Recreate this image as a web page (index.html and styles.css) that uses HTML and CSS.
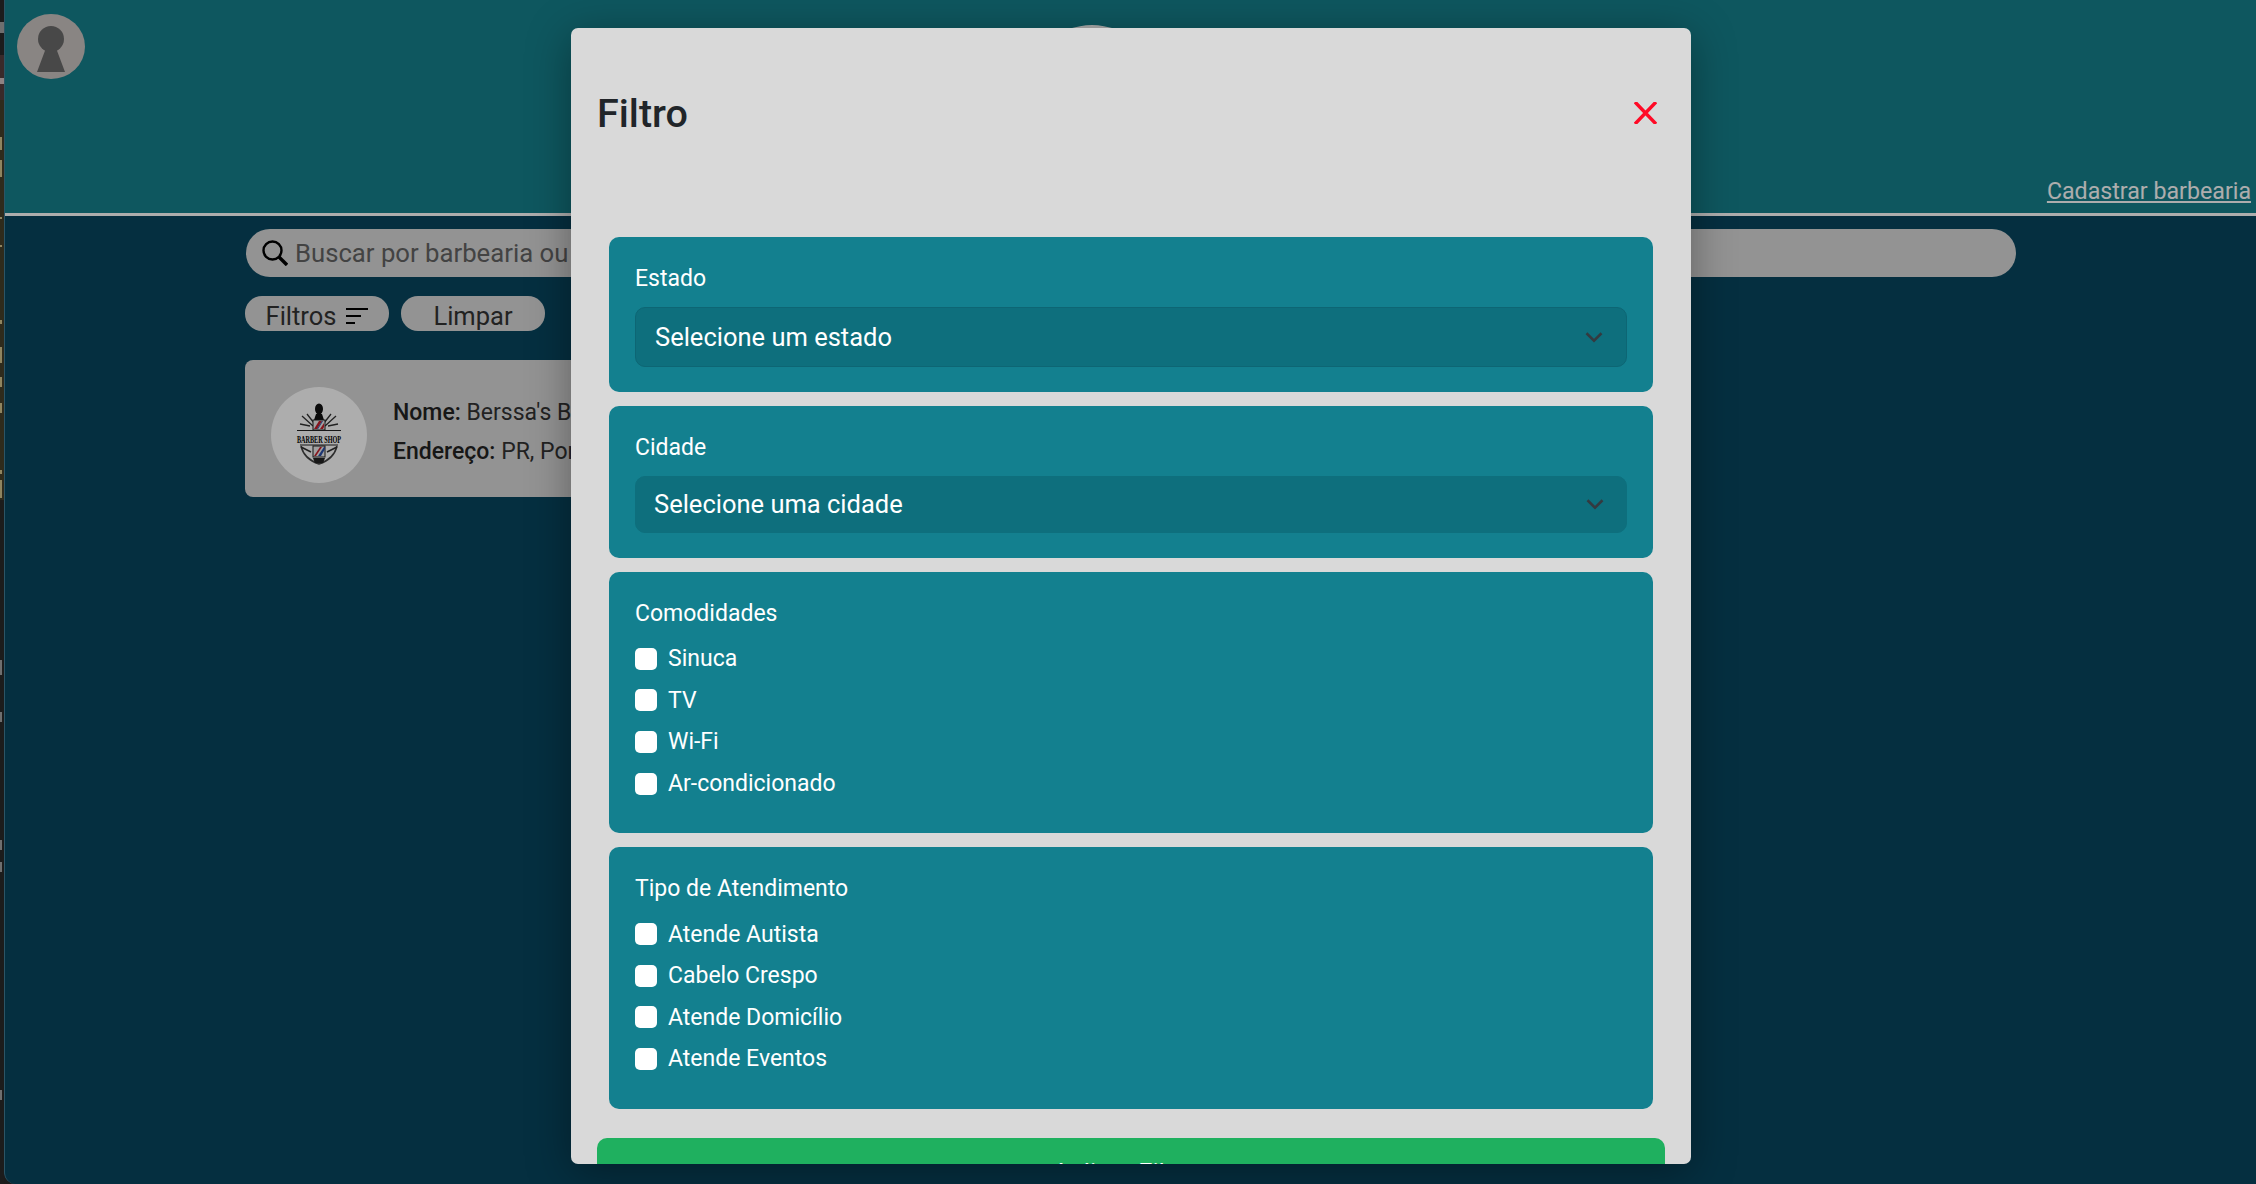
FILE: index.html
```html
<!DOCTYPE html>
<html lang="pt-BR">
<head>
  <meta charset="UTF-8" />
  <title>Barbearias</title>
  <link rel="stylesheet" href="styles.css">
</head>
<body>
  <!-- sliver of the window behind the browser -->
  <div class="strip">
    <div class="strip-a"></div>
    <div class="strip-b"></div>
    <div class="strip-c"></div>
    <div class="strip-d"></div>
  </div>

  <div class="window">
    <header class="topbar">
      <svg class="avatar" viewBox="0 0 68 65">
        <ellipse cx="34" cy="32.5" rx="34" ry="32.5" fill="#cbc4c1"/>
        <circle cx="34" cy="25" r="13" fill="#6a6a6a"/>
        <polygon points="29,34 39,34 48,58 20,58" fill="#6a6a6a"/>
      </svg>
      <div class="top-logo"></div>
      <a class="register-link" href="#">Cadastrar barbearia</a>
    </header>

    <main class="content">
      <div class="search">
        <svg class="search-icon" viewBox="0 0 26 26" fill="none" stroke="#000">
          <circle cx="10.5" cy="10.5" r="9" stroke-width="2.4"/>
          <path d="M17 17l8 8" stroke-width="3.4"/>
        </svg>
        <input class="search-input" type="text" placeholder="Buscar por barbearia ou cidade" />
      </div>

      <div class="actions">
        <button class="pill pill-filter">Filtros
          <svg class="filter-icon" viewBox="0 0 22 16" fill="none" stroke="#000" stroke-width="2">
            <path d="M0 1h22M0 8h15M0 15h9"/>
          </svg>
        </button>
        <button class="pill pill-clear">Limpar</button>
      </div>

      <article class="shop-card">
        <div class="shop-logo">
          <svg viewBox="0 0 46 64" width="46" height="64">
            <ellipse cx="23" cy="6" rx="4" ry="5.5" fill="#111"/>
            <path d="M20 11h6l2 6h-10z" fill="#111"/>
            <path d="M6 13l11 10M40 13L29 23M11 11l7 9M35 11l-7 9M4 21l10 2M42 21l-10 2" stroke="#333" stroke-width="1.300" fill="none"/>
            <rect x="17" y="17" width="12" height="10" fill="#eee" stroke="#222"/>
            <path d="M18 26l5-8h3l-5 8zM24 26l4-6v4l-1 2z" fill="#c8202c"/>
            <path d="M21 26l5-8h1l-5 8z" fill="#2a4fa8"/>
            <path d="M1 27.500h44M4 42h38" stroke="#222" stroke-width="1"/>
            <text x="23" y="39.500" class="logo-text" textLength="44" lengthAdjust="spacingAndGlyphs">BARBER SHOP</text>
            <path d="M5 43q3 13 18 18q15-5 18-18" fill="none" stroke="#444" stroke-width="1.600"/>
            <path d="M5 44l10 5M41 44l-10 5" stroke="#333" stroke-width="1.600"/>
            <rect x="17" y="43" width="12" height="11" fill="#eee" stroke="#222"/>
            <path d="M18 53l6-9h2l-6 9z" fill="#c8202c"/>
            <path d="M22 53l6-9h1v2l-4 7z" fill="#2a4fa8"/>
            <path d="M17 55h12l-2 5h-8z" fill="#222"/>
          </svg>
        </div>
        <div class="shop-info">
          <p><b>Nome:</b> Berssa's Barbearia</p>
          <p><b>Endereço:</b> PR, Ponta Grossa</p>
        </div>
      </article>
    </main>

    <div class="backdrop"></div>

    <section class="modal">
      <div class="modal-header">
        <h2 class="modal-title">Filtro</h2>
        <svg class="close-icon" viewBox="0 0 23 22" stroke="#ff0a26" stroke-width="3.4" fill="none">
          <path d="M1 0l21 22M22 0L1 22"/>
        </svg>
      </div>

      <div class="modal-body">
        <div class="group">
          <label class="group-label">Estado</label>
          <div class="select select-state">
            <span>Selecione um estado</span>
            <svg class="chevron" viewBox="0 0 16 16" fill="none" stroke="#343a40" stroke-width="2"><path d="M2 5l6 6 6-6"/></svg>
          </div>
        </div>

        <div class="group">
          <label class="group-label">Cidade</label>
          <div class="select select-city">
            <span>Selecione uma cidade</span>
            <svg class="chevron" viewBox="0 0 16 16" fill="none" stroke="#343a40" stroke-width="2"><path d="M2 5l6 6 6-6"/></svg>
          </div>
        </div>

        <div class="group group-checks">
          <label class="group-label">Comodidades</label>
          <ul class="checks">
            <li><span class="box"></span>Sinuca</li>
            <li><span class="box"></span>TV</li>
            <li><span class="box"></span>Wi-Fi</li>
            <li><span class="box"></span>Ar-condicionado</li>
          </ul>
        </div>

        <div class="group group-checks">
          <label class="group-label">Tipo de Atendimento</label>
          <ul class="checks">
            <li><span class="box"></span>Atende Autista</li>
            <li><span class="box"></span>Cabelo Crespo</li>
            <li><span class="box"></span>Atende Domicílio</li>
            <li><span class="box"></span>Atende Eventos</li>
          </ul>
        </div>
      </div>

      <button class="apply">Aplicar Filtros</button>
    </section>
  </div>
</body>
</html>
```

FILE: styles.css
```css
* {
  box-sizing: border-box;
}
html, body {
  height: 100%;
}
body {
  margin: 0;
  display: flex;
  overflow: hidden;
  background: #1b1b1b;
  font-family: Roboto, "Liberation Sans", sans-serif;
}

/* the strip only shows bits of letters, so gradients are enough */
.strip {
  width: 4px;
  flex-shrink: 0;
  display: flex;
  flex-direction: column;
}
.strip-a {
  height: 55px;
  background: linear-gradient(#1c1c1c 22px, #6f6f6f 22px, #6f6f6f 33px, #1c1c1c 33px);
}
.strip-b {
  height: 45px;
  background: linear-gradient(#3a2a2a 23px, #8f8383 23px, #8f8383 29px, #3a2a2a 29px);
}
.strip-c {
  height: 400px;
  background-color: #2f2b1c;
  background-image: linear-gradient(transparent 37px, #8f8560 37px, #8f8560 50px, transparent 50px,
    transparent 60px, #8f8560 60px, #8f8560 77px, transparent 77px,
    transparent 117px, #8f8560 117px, #8f8560 119px, transparent 119px,
    transparent 145px, #8f8560 145px, #8f8560 147px, transparent 147px,
    transparent 220px, #8f8560 220px, #8f8560 224px, transparent 224px,
    transparent 247px, #8f8560 247px, #8f8560 263px, transparent 263px,
    transparent 277px, #8f8560 277px, #8f8560 287px, transparent 287px,
    transparent 303px, #8f8560 303px, #8f8560 313px, transparent 313px,
    transparent 370px, #8f8560 370px, #8f8560 374px, transparent 374px,
    transparent 380px, #8f8560 380px, #8f8560 398px, transparent 398px);
  background-size: 2px 100%;
  background-repeat: no-repeat;
}
.strip-d {
  flex: 1;
  background-color: #1c1c1c;
  background-image: linear-gradient(transparent 160px, #6f6f6f 160px, #6f6f6f 175px, transparent 175px,
    transparent 212px, #6f6f6f 212px, #6f6f6f 222px, transparent 222px,
    transparent 340px, #6f6f6f 340px, #6f6f6f 350px, transparent 350px,
    transparent 362px, #6f6f6f 362px, #6f6f6f 372px, transparent 372px,
    transparent 590px, #6f6f6f 590px, #6f6f6f 600px, transparent 600px);
  background-size: 2px 100%;
  background-repeat: no-repeat;
}

.window {
  flex: 1;
  position: relative;
  overflow: hidden;
  background: #08465f;
  border-left: 1px solid #2c5566;
  border-bottom-left-radius: 12px;
}

.topbar {
  height: 216px;
  display: flex;
  align-items: flex-start;
  padding: 14px 5px 0 12px;
  background: #15808d;
  border-bottom: 3px solid #fff;
}
.avatar {
  width: 68px;
  height: 65px;
  flex-shrink: 0;
}
.top-logo {
  width: 122px;
  height: 122px;
  margin: 11px 0 0 946px;
  border-radius: 50%;
  background: #fff;
}
.register-link {
  margin-left: auto;
  align-self: flex-end;
  margin-bottom: 8px;
  font-size: 23.200px;
  color: #fff;
}

.content {
  padding: 13px 0 0 240px;
}
.search {
  width: 1770px;
  height: 48px;
  margin-left: 1px;
  display: flex;
  align-items: center;
  gap: 7px;
  padding-left: 16px;
  background: #d9d9d9;
  border-radius: 24px;
}
.search-icon {
  width: 26px;
  height: 26px;
  flex-shrink: 0;
}
.search-input {
  flex: 1;
  padding: 0;
  border: none;
  outline: none;
  background: none;
  font-family: inherit;
  font-size: 25.700px;
  color: #333;
}
.search-input::placeholder {
  color: #636363;
}

.actions {
  display: flex;
  gap: 12px;
  margin-top: 19px;
}
.pill {
  width: 144px;
  height: 35px;
  display: flex;
  align-items: center;
  justify-content: center;
  gap: 10px;
  padding: 5px 0 0;
  border: none;
  border-radius: 17px;
  background: #d9d9d9;
  font-family: inherit;
  font-size: 25.500px;
  line-height: 30px;
  color: #333;
}
.filter-icon {
  width: 22px;
  height: 16px;
}

.shop-card {
  width: 900px;
  height: 137px;
  margin-top: 29px;
  display: flex;
  align-items: flex-start;
  gap: 26px;
  padding: 27px 0 0 26px;
  background: #d9d9d9;
  border-radius: 8px;
}
.shop-logo {
  width: 96px;
  height: 96px;
  display: flex;
  align-items: center;
  justify-content: center;
  border-radius: 50%;
  background: #fff;
}
.logo-text {
  font-family: "Liberation Serif", serif;
  font-size: 11px;
  font-weight: 700;
  text-anchor: middle;
}
.shop-info {
  margin-top: 6px;
}
.shop-info p {
  margin: 0;
  font-size: 23px;
  line-height: 39px;
  color: #333;
}
.shop-info b {
  font-weight: 500;
  color: #222;
}

.backdrop {
  position: absolute;
  inset: 0;
  background: rgba(0, 0, 0, 0.32);
}

.modal {
  position: absolute;
  top: 28px;
  left: 566px;
  width: 1120px;
  height: 1136px;
  overflow: hidden;
  background: #d9d9d9;
  border-radius: 7px;
  box-shadow: 0 8px 44px rgba(0, 0, 0, 0.36);
}
.modal-header {
  height: 168px;
  display: flex;
  align-items: center;
  justify-content: space-between;
  padding: 2px 34px 0 26px;
}
.modal-title {
  margin: 0;
  font-size: 39.500px;
  font-weight: 500;
  color: #212529;
}
.close-icon {
  width: 23px;
  height: 22px;
}

.modal-body {
  display: flex;
  flex-direction: column;
  gap: 14px;
  padding: 41px 38px 0;
}
.group {
  padding: 27px 26px 25px;
  background: #13808f;
  border-radius: 10px;
  color: #fff;
}
.group-label {
  display: block;
  font-size: 23px;
  line-height: 30px;
}
.select {
  margin-top: 13px;
  display: flex;
  align-items: center;
  justify-content: space-between;
  background: #0e6f7d;
  border: 1px solid #0d6674;
  border-radius: 10px;
  font-size: 25.500px;
}
.select-state {
  height: 60px;
  padding: 0 22px 0 19px;
}
.select-city {
  height: 57px;
  padding: 0 21px 2px 18px;
  border-color: #0e6f7d;
}
.chevron {
  width: 20px;
  height: 20px;
}

.group-checks {
  padding-bottom: 29px;
}
.checks {
  list-style: none;
  margin: 9px 0 0;
  padding: 0;
}
.checks li {
  height: 41.600px;
  display: flex;
  align-items: center;
  gap: 11px;
  font-size: 23px;
}
.box {
  width: 22px;
  height: 22px;
  background: #fff;
  border-radius: 5px;
}

.apply {
  display: block;
  width: 1068px;
  height: 70px;
  margin: 29px 0 0 26px;
  border: none;
  border-radius: 10px;
  background: #1fb05f;
  font-family: inherit;
  font-size: 25.500px;
  color: #fff;
}
```
